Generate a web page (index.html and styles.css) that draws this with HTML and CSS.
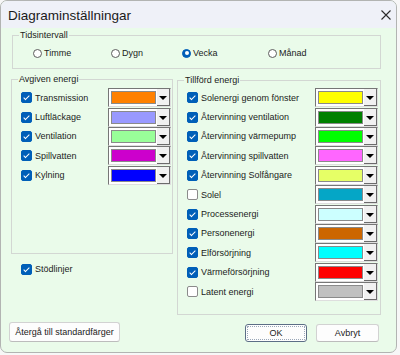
FILE: index.html
```html
<!DOCTYPE html>
<html lang="sv">
<head>
    <meta charset="UTF-8">
    <meta name="viewport" content="width=device-width, initial-scale=1.0">
    <title>Diagraminställningar</title>
    <link rel="stylesheet" href="styles.css">
</head>
<body>
    <div class="window">
        <div class="titlebar">
            <span class="title">Diagraminställningar</span>
            <svg class="close" width="10" height="10" viewBox="0 0 10 10">
                <path d="M0.5 0.5 L9.5 9.5 M9.5 0.5 L0.5 9.5" stroke="#2b2b2b" stroke-width="1.1" fill="none"/>
            </svg>
        </div>
        <div class="content">
            <fieldset class="group interval">
                <legend>Tidsintervall</legend>
                <div class="radios">
                    <label class="radio"><span class="dot"></span>Timme</label>
                    <label class="radio"><span class="dot"></span>Dygn</label>
                    <label class="radio"><span class="dot on"></span>Vecka</label>
                    <label class="radio"><span class="dot"></span>Månad</label>
                </div>
            </fieldset>

            <div class="columns">
                <div class="col-left">
                    <fieldset class="group given">
                        <legend>Avgiven energi</legend>
                        <div class="rows">
                            <div class="row"><label class="check"><span class="box on"></span>Transmission</label><span class="combo"><span class="swatch sw-transmission"></span><span class="arrow"></span></span></div>
                            <div class="row"><label class="check"><span class="box on"></span>Luftläckage</label><span class="combo"><span class="swatch sw-luft"></span><span class="arrow"></span></span></div>
                            <div class="row"><label class="check"><span class="box on"></span>Ventilation</label><span class="combo"><span class="swatch sw-vent"></span><span class="arrow"></span></span></div>
                            <div class="row"><label class="check"><span class="box on"></span>Spillvatten</label><span class="combo"><span class="swatch sw-spill"></span><span class="arrow"></span></span></div>
                            <div class="row"><label class="check"><span class="box on"></span>Kylning</label><span class="combo"><span class="swatch sw-kyl"></span><span class="arrow"></span></span></div>
                        </div>
                    </fieldset>
                    <label class="check guides"><span class="box on"></span>Stödlinjer</label>
                </div>

                <fieldset class="group supplied">
                    <legend>Tillförd energi</legend>
                    <div class="rows">
                        <div class="row"><label class="check"><span class="box on"></span>Solenergi genom fönster</label><span class="combo"><span class="swatch sw-sol"></span><span class="arrow"></span></span></div>
                        <div class="row"><label class="check"><span class="box on"></span>Återvinning ventilation</label><span class="combo"><span class="swatch sw-atvent"></span><span class="arrow"></span></span></div>
                        <div class="row"><label class="check"><span class="box on"></span>Återvinning värmepump</label><span class="combo"><span class="swatch sw-vp"></span><span class="arrow"></span></span></div>
                        <div class="row"><label class="check"><span class="box on"></span>Återvinning spillvatten</label><span class="combo"><span class="swatch sw-atspill"></span><span class="arrow"></span></span></div>
                        <div class="row"><label class="check"><span class="box on"></span>Återvinning Solfångare</label><span class="combo"><span class="swatch sw-solf"></span><span class="arrow"></span></span></div>
                        <div class="row"><label class="check"><span class="box"></span>Solel</label><span class="combo"><span class="swatch sw-solel"></span><span class="arrow"></span></span></div>
                        <div class="row"><label class="check"><span class="box on"></span>Processenergi</label><span class="combo"><span class="swatch sw-process"></span><span class="arrow"></span></span></div>
                        <div class="row"><label class="check"><span class="box on"></span>Personenergi</label><span class="combo"><span class="swatch sw-person"></span><span class="arrow"></span></span></div>
                        <div class="row"><label class="check"><span class="box on"></span>Elförsörjning</label><span class="combo"><span class="swatch sw-el"></span><span class="arrow"></span></span></div>
                        <div class="row"><label class="check"><span class="box on"></span>Värmeförsörjning</label><span class="combo"><span class="swatch sw-varme"></span><span class="arrow"></span></span></div>
                        <div class="row"><label class="check"><span class="box"></span>Latent energi</label><span class="combo"><span class="swatch sw-latent"></span><span class="arrow"></span></span></div>
                    </div>
                </fieldset>
            </div>

            <div class="buttons">
                <button class="btn reset">Återgå till standardfärger</button>
                <div class="actions">
                    <button class="btn ok">OK</button>
                    <button class="btn">Avbryt</button>
                </div>
            </div>
        </div>
    </div>
</body>
</html>
```

FILE: styles.css
```css
body {
    margin: 0;
    background: #f7f7f7;
    font-family: "Liberation Sans", Arial, sans-serif;
    font-size: 9px;
    color: #1b1b1b;
}

.window {
    width: 397px;
    height: 353px;
    box-sizing: border-box;
    border: 1px solid #b2b4b2;
    border-radius: 7px;
    background: #eafbea;
    overflow: hidden;
}

.titlebar {
    height: 27px;
    display: flex;
    align-items: center;
    justify-content: space-between;
    padding: 0 5px 0 7px;
    background: #eff1f8;
}

.title {
    font-size: 13.5px;
    color: #1a1a1a;
    margin-top: 1px;
}

.close {
    margin-top: 1px;
}

.content {
    padding: 1px 15px 0 8px;
}

/* group boxes */
.group {
    margin: 0;
    padding: 0 1px 0 6px;
    border: 1px solid #d3d7d3;
    box-sizing: border-box;
    min-width: 0;
}

.group legend {
    padding: 0 1px;
    line-height: 12px;
    height: 12px;
}

.interval {
    margin-left: 3px;
    width: 369px;
    height: 40px;
}

.radios {
    display: grid;
    grid-template-columns: 78px 71px 86px auto;
    padding: 6px 0 0 14px;
}

.radio {
    display: flex;
    align-items: center;
    gap: 2px;
    height: 12px;
}

.dot {
    width: 9px;
    height: 9px;
    box-sizing: border-box;
    border: 1px solid #5d5d5d;
    border-radius: 50%;
    background: #fff;
    display: flex;
    align-items: center;
    justify-content: center;
}

.dot.on {
    background: #005fb8;
    border-color: #005fb8;
}

.dot.on::after {
    content: "";
    width: 4px;
    height: 4px;
    border-radius: 50%;
    background: #fff;
}

.columns {
    display: flex;
    gap: 4px;
    padding-left: 2px;
    margin-top: 4px;
}

.col-left {
    width: 162px;
}

.given {
    width: 162px;
    height: 181px;
}

.supplied {
    width: 204px;
    height: 241px;
    margin-top: 1px;
    padding-right: 2px;
}

.given .rows {
    padding-top: 3px;
}

.supplied .rows {
    padding-top: 2px;
}

.row {
    height: 19.4px;
    display: flex;
    align-items: center;
    justify-content: space-between;
}

.check {
    display: flex;
    align-items: center;
    gap: 3px;
    margin-left: 3px;
    white-space: nowrap;
}

.box {
    position: relative;
    width: 11px;
    height: 11px;
    box-sizing: border-box;
    border: 1px solid #8b8b8b;
    border-radius: 2px;
    background: #fff;
}

.box.on {
    background: #005fb8;
    border-color: #005fb8;
}

.box.on::after {
    content: "";
    position: absolute;
    left: 3px;
    top: 1px;
    width: 2px;
    height: 5px;
    border: solid #fff;
    border-width: 0 1.2px 1.2px 0;
    transform: rotate(45deg);
}

.guides {
    margin: 9px 0 0 10px;
    height: 12px;
}

/* colour combo boxes */
.combo {
    display: flex;
    width: 63px;
    height: 19px;
    box-sizing: border-box;
    border: 1px solid;
    border-color: #767676 #dedede #dedede #767676;
    background: #fff;
}

.swatch {
    flex: 1;
    margin: 2px 1px 2px 2px;
    border: 1px solid #8a8a8a;
}

.arrow {
    width: 13px;
    box-sizing: border-box;
    background: #f1f1f1;
    border-right: 1px solid #6b6b6b;
    border-bottom: 1px solid #6b6b6b;
    display: flex;
    align-items: center;
    justify-content: center;
}

.arrow::after {
    content: "";
    border-left: 4px solid transparent;
    border-right: 4px solid transparent;
    border-top: 4px solid #000;
    margin-top: 2px;
}

.sw-transmission { background: #ff8000; }
.sw-luft { background: #9999ff; }
.sw-vent { background: #99ff99; }
.sw-spill { background: #cc00cc; }
.sw-kyl { background: #0000ff; }
.sw-sol { background: #ffff00; }
.sw-atvent { background: #008000; }
.sw-vp { background: #00ff00; }
.sw-atspill { background: #ff66ff; }
.sw-solf { background: #e6ff66; }
.sw-solel { background: #05a6c6; }
.sw-process { background: #ccffff; }
.sw-person { background: #cc6600; }
.sw-el { background: #00ffff; }
.sw-varme { background: #ff0000; }
.sw-latent { background: #c0c0c0; }

/* bottom buttons */
.buttons {
    display: flex;
    justify-content: space-between;
    align-items: flex-start;
    margin-top: 7px;
}

.actions {
    display: flex;
    gap: 9px;
    margin-top: 2px;
    margin-right: 2px;
}

.btn {
    font-family: "Liberation Sans", Arial, sans-serif;
    font-size: 9px;
    color: #1b1b1b;
    background: #fdfdfd;
    border: 1px solid #d2d2d2;
    border-bottom-color: #bcbcbc;
    border-radius: 3px;
    height: 18px;
    width: 63px;
    padding: 0;
}

.reset {
    width: 111px;
    height: 20px;
}

.ok {
    width: 62px;
    border-color: #5c6e86;
    outline: 1px dotted #9aa7b8;
    outline-offset: -3px;
}
```
